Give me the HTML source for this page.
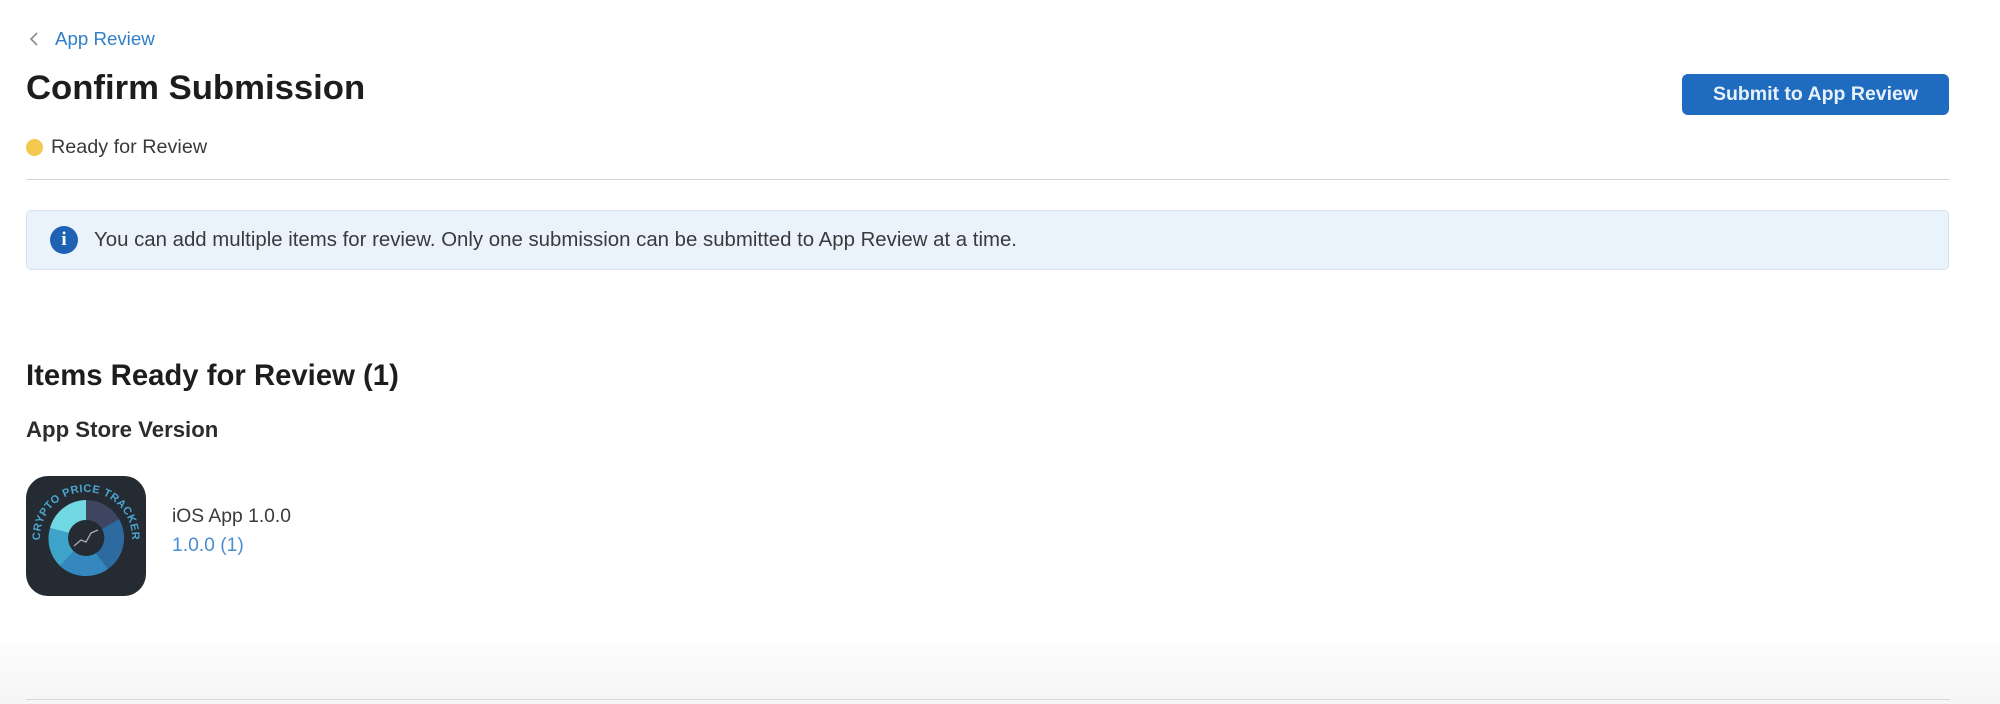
<!DOCTYPE html>
<html><head><meta charset="utf-8"><style>
*{margin:0;padding:0;box-sizing:border-box}
body{width:2000px;height:704px;background:#fff;font-family:"Liberation Sans",Arial,sans-serif;position:relative;overflow:hidden;color:#1d1d1f}
.a{position:absolute;white-space:nowrap}
</style></head><body>
<svg class="a" style="left:28px;top:31px" width="12" height="16" viewBox="0 0 12 16"><path d="M9 2 L3 8 L9 14" fill="none" stroke="#8a8a8e" stroke-width="1.6"/></svg>
<div class="a" style="left:55px;top:28px;font-size:18.7px;color:#2f7fc8">App Review</div>
<div class="a" style="left:26px;top:69px;font-size:34.7px;font-weight:bold;color:#1d1d1f">Confirm Submission</div>
<div class="a" style="left:26px;top:139px;width:17px;height:17px;border-radius:50%;background:#f2c94c"></div>
<div class="a" style="left:51px;top:136px;font-size:19.8px;color:#3a3a3c">Ready for Review</div>
<div class="a" style="left:26px;top:179px;width:1924px;height:1px;background:#d2d2d7"></div>
<div class="a" style="left:1682px;top:74px;width:267px;height:41px;border-radius:6px;background:#1e6bbf;color:#e8f1fb;font-size:19.5px;font-weight:bold;text-align:center;line-height:41px">Submit to App Review</div>
<div class="a" style="left:26px;top:210px;width:1923px;height:60px;border-radius:5px;background:#eaf3fb;border:1px solid #d3e2ef"></div>
<div class="a" style="left:50px;top:226px;width:28px;height:28px;border-radius:50%;background:#1e63b3;color:#fff;font-size:19px;font-weight:bold;font-family:'Liberation Serif',serif;text-align:center;line-height:28px">i</div>
<div class="a" style="left:94px;top:229px;font-size:20.4px;color:#3a3a3c">You can add multiple items for review. Only one submission can be submitted to App Review at a time.</div>
<div class="a" style="left:26px;top:359px;font-size:29.3px;font-weight:bold">Items Ready for Review (1)</div>
<div class="a" style="left:26px;top:417px;font-size:22.2px;font-weight:bold;color:#2c2c2e">App Store Version</div>
<svg class="a" style="left:26px;top:476px" width="120" height="120" viewBox="0 0 120 120">
<defs><path id="arc" d="M14 62 A46 46 0 0 1 106 62"/></defs>
<rect width="120" height="120" rx="22" fill="#252b33"/>
<g transform="translate(60,62)">
<path d="M0 -38 A38 38 0 0 1 33 -19 L16 -9 A18 18 0 0 0 0 -18Z" fill="#3f4560"/>
<path d="M33 -19 A38 38 0 0 1 22 31 L10 15 A18 18 0 0 0 16 -9Z" fill="#2c6aa0"/>
<path d="M22 31 A38 38 0 0 1 -26 28 L-12 13 A18 18 0 0 0 10 15Z" fill="#3588bf"/>
<path d="M-26 28 A38 38 0 0 1 -36 -10 L-17 -5 A18 18 0 0 0 -12 13Z" fill="#3ea3c9"/>
<path d="M-36 -10 A38 38 0 0 1 0 -38 L0 -18 A18 18 0 0 0 -17 -5Z" fill="#6fd8e3"/>
<circle r="18" fill="#252b33"/>
<path d="M-12 8 L-5 2 L0 4 L5 -5 L12 -8" fill="none" stroke="#aab" stroke-width="1.3"/>
</g>
<text font-size="11" font-weight="bold" fill="#4aa6d0" font-family="Liberation Sans" letter-spacing="0.5"><textPath href="#arc" startOffset="50%" text-anchor="middle">CRYPTO PRICE TRACKER</textPath></text>
</svg>
<div class="a" style="left:172px;top:506px;font-size:19.3px;color:#3a3a3c">iOS App 1.0.0</div>
<div class="a" style="left:172px;top:535px;font-size:19.3px;color:#4a8ed0">1.0.0 (1)</div>
<div class="a" style="left:0;top:644px;width:2000px;height:60px;background:linear-gradient(#fdfdfd,#f5f5f5)"></div>
<div class="a" style="left:26px;top:699px;width:1924px;height:1px;background:#d8d8d8"></div>
</body></html>
